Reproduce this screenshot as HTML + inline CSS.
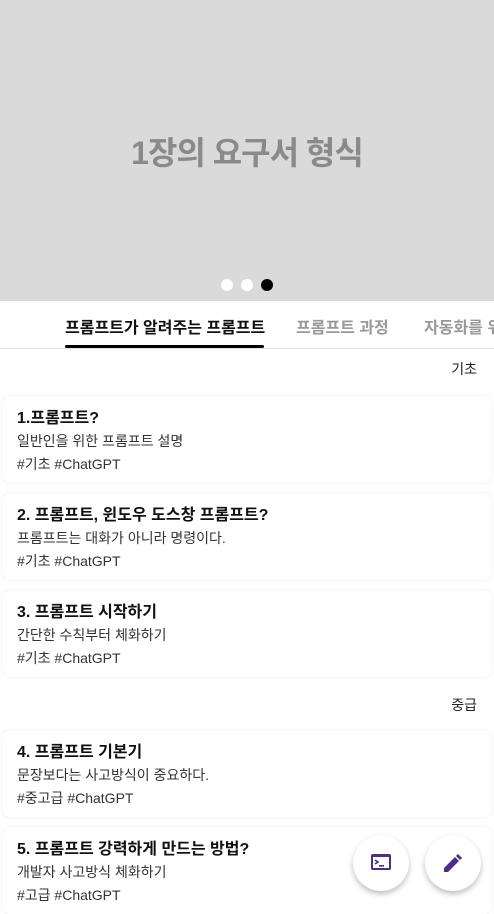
<!DOCTYPE html><html><head><meta charset="utf-8"><style>
body{margin:0;width:494px;height:906px;overflow:hidden;background:#fff;font-family:"Liberation Sans","Noto Sans CJK KR",sans-serif;position:relative}
.hero{height:301px;background:#dadada;position:relative}
.hero h1{position:absolute;top:128px;left:0;right:0;text-align:center;margin:0;font-size:32px;color:#8a8a8a;font-weight:bold;letter-spacing:-1px}
.dots{position:absolute;top:278px;left:221px}
.dots span{display:inline-block;width:12px;height:12px;border-radius:50%;background:#fff;margin-right:8px}
.tabs{height:47px;border-bottom:1px solid #e2e2e2;position:relative;white-space:nowrap;font-size:16px;font-weight:bold}
.tabs span{position:absolute;top:13px}
.ul{position:absolute;left:65px;top:44px;width:199px;height:3px;background:#000;border-radius:2px}
.sec{position:absolute;right:17px;font-size:14px;color:#222}
.card{position:absolute;left:2px;width:490px;height:87px;background:#fff;border-radius:8px;box-shadow:0 0 2px rgba(0,0,0,.12);}
.card b{position:absolute;left:15px;top:8px;font-size:16px;color:#111}
.card .s{position:absolute;left:15px;top:35px;font-size:14px;color:#333}
.card .t{position:absolute;left:15px;top:58px;font-size:14px;color:#333}
.fab{position:absolute;top:835px;width:56px;height:56px;border-radius:50%;background:#fff;box-shadow:0 3px 6px rgba(0,0,0,.25)}
</style></head><body>
<div class="hero"><h1>1장의 요구서 형식</h1><div class="dots"><span></span><span></span><span style="background:#000"></span></div></div>
<div class="tabs"><span style="left:65px;color:#111">프롬프트가 알려주는 프롬프트</span><span style="left:296px;color:#999">프롬프트 과정</span><span style="left:424px;color:#999">자동화를 위</span><div class="ul"></div></div>
<div class="sec" style="top:359px">기초</div>
<div class="card" style="top:396px"><b>1.프롬프트?</b><div class="s">일반인을 위한 프롬프트 설명</div><div class="t">#기초 #ChatGPT</div></div>
<div class="card" style="top:493px"><b>2. 프롬프트, 윈도우 도스창 프롬프트?</b><div class="s">프롬프트는 대화가 아니라 명령이다.</div><div class="t">#기초 #ChatGPT</div></div>
<div class="card" style="top:590px"><b>3. 프롬프트 시작하기</b><div class="s">간단한 수칙부터 체화하기</div><div class="t">#기초 #ChatGPT</div></div>
<div class="sec" style="top:695px">중급</div>
<div class="card" style="top:730px"><b>4. 프롬프트 기본기</b><div class="s">문장보다는 사고방식이 중요하다.</div><div class="t">#중고급 #ChatGPT</div></div>
<div class="card" style="top:827px"><b>5. 프롬프트 강력하게 만드는 방법?</b><div class="s">개발자 사고방식 체화하기</div><div class="t">#고급 #ChatGPT</div></div>
<div class="fab" style="left:353px"><svg width="56" height="56" viewBox="0 0 56 56"><rect x="18" y="19" width="20" height="16" rx="2" fill="#4a2f8a"/><rect x="20" y="22" width="16" height="11" fill="#fff"/><path d="M22 25l3 2-3 2" stroke="#4a2f8a" stroke-width="1.6" fill="none"/><rect x="26" y="30" width="5" height="1.6" fill="#4a2f8a"/></svg></div>
<div class="fab" style="left:425px"><svg width="56" height="56" viewBox="0 0 56 56"><path d="M19 37v-4l11-11 4 4-11 11z M31 21l2-2 4 4-2 2z" fill="#4a2f8a"/></svg></div>
</body></html>
